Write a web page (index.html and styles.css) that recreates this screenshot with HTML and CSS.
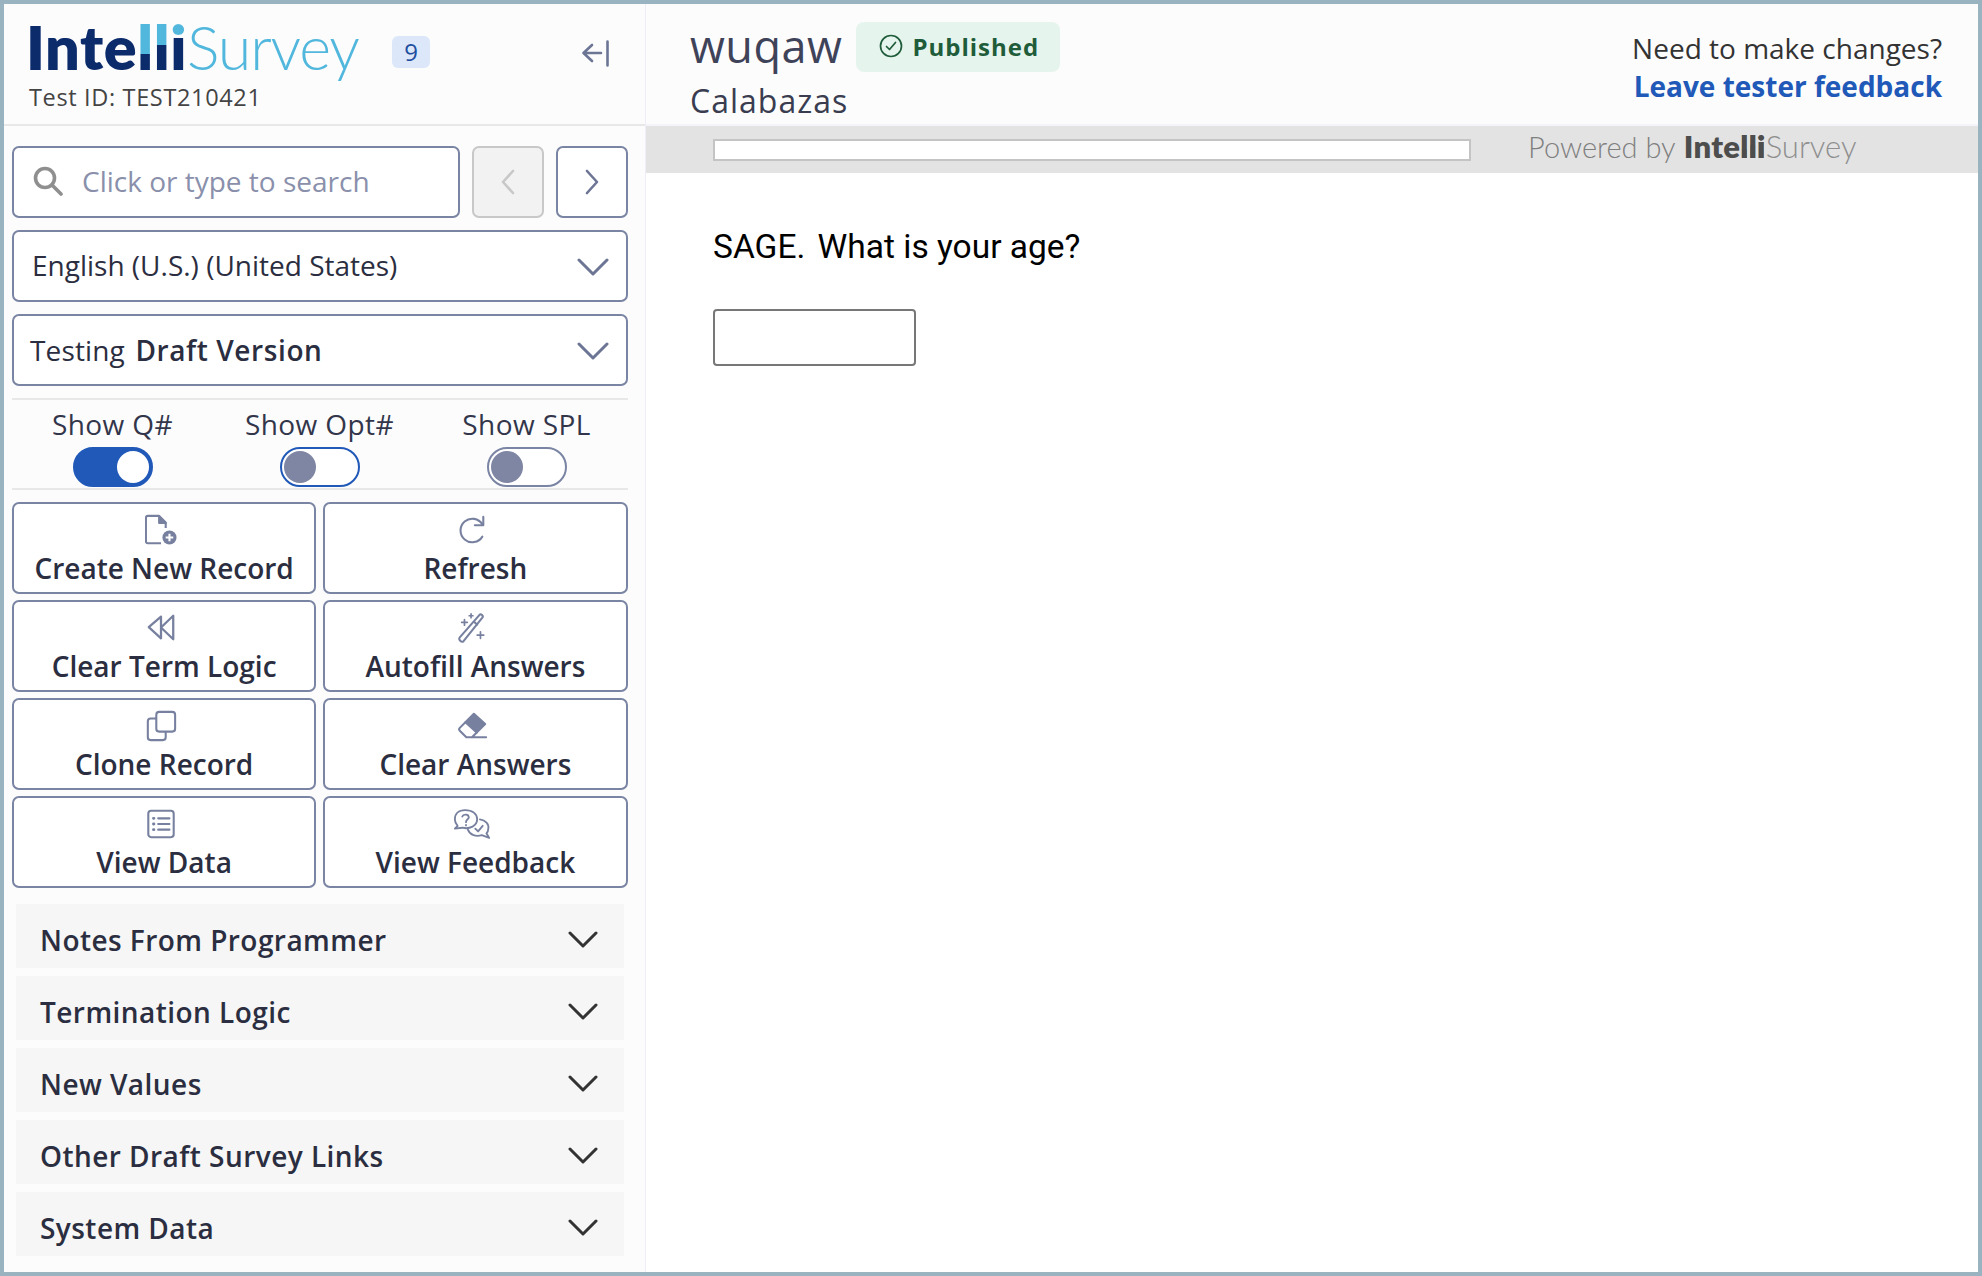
FILE: index.html
```html
<!DOCTYPE html>
<html lang="en">
<head>
<meta charset="utf-8">
<title>IntelliSurvey test</title>
<link rel="stylesheet" href="styles.css">
</head>
<body>
<div class="frame">
  <aside class="sidebar">
    <header class="brand">
      <div class="brand-top">
        <div class="logo"><span class="logo-bold">Inte</span><span class="logo-bold l1">l</span><span class="logo-bold l2">l</span><span class="logo-bold l3">i</span><span class="logo-light">Survey</span></div>
        <span class="count">9</span>
        <svg class="collapse" viewBox="0 0 30 30" fill="none" stroke-width="2.600" stroke-linecap="round" stroke-linejoin="round"><path d="M12 7 3.500 15l8.500 8M4 15h17M27.500 3.500v24"/></svg>
      </div>
      <div class="test-id">Test ID: TEST210421</div>
    </header>
    <div class="controls">
      <div class="search-row">
        <div class="box search">
          <svg class="search-icon" viewBox="0 0 30 30" fill="none" stroke="#8f8f8f" stroke-width="3.600"><circle cx="12" cy="12" r="9.500"/><path d="m19 19 9 9" stroke-linecap="round"/></svg>
          <span class="placeholder">Click or type to search</span>
        </div>
        <button class="box nav disabled"><svg viewBox="0 0 16 26" fill="none" stroke="#c8c8c8" stroke-width="2.600" stroke-linecap="round" stroke-linejoin="round"><path d="M13 2 3 13l10 11"/></svg></button>
        <button class="box nav"><svg viewBox="0 0 16 26" fill="none" stroke="#6c7594" stroke-width="2.600" stroke-linecap="round" stroke-linejoin="round"><path d="m3 2 10 11L3 24"/></svg></button>
      </div>
      <div class="box select lang"><span>English (U.S.) (United States)</span><svg class="chev" viewBox="0 0 32 18" fill="none" stroke="#6c7594" stroke-width="3" stroke-linecap="round" stroke-linejoin="round"><path d="m2 2 14 14L30 2"/></svg></div>
      <div class="box select version"><span>Testing <b class="strong">Draft Version</b></span><svg class="chev" viewBox="0 0 32 18" fill="none" stroke="#6c7594" stroke-width="3" stroke-linecap="round" stroke-linejoin="round"><path d="m2 2 14 14L30 2"/></svg></div>
      <div class="toggles">
        <div class="toggle-item"><span>Show Q#</span><span class="toggle on"><i></i></span></div>
        <div class="toggle-item"><span>Show Opt#</span><span class="toggle focus"><i></i></span></div>
        <div class="toggle-item"><span>Show SPL</span><span class="toggle"><i></i></span></div>
      </div>
      <div class="actions">
        <button class="box action">
          <svg viewBox="0 0 34 34" fill="none" stroke="#77809f" stroke-width="2.200" stroke-linejoin="round"><path d="M17 31H3a2 2 0 0 1-2-2V4a2 2 0 0 1 2-2h12l7 7v6"/><path d="M15 2.500v7h7z" fill="#77809f"/><circle cx="26" cy="25" r="7.500" fill="#77809f" stroke="none"/><path d="M26 21v8M22 25h8" stroke="#fff"/></svg>
          <span>Create New Record</span>
        </button>
        <button class="box action">
          <svg viewBox="0 0 34 34" fill="none" stroke="#77809f" stroke-width="2.200" stroke-linecap="round" stroke-linejoin="round"><path d="M28 11A12.500 12.500 0 1 0 28 24"/><path d="M29 3v9h-9"/></svg>
          <span>Refresh</span>
        </button>
        <button class="box action">
          <svg viewBox="0 0 34 34" fill="none" stroke="#77809f" stroke-width="2.400" stroke-linejoin="round"><path d="M17 5 4 16l13 12zM30 4v25L17 16.500z"/></svg>
          <span>Clear Term Logic</span>
        </button>
        <button class="box action">
          <svg viewBox="0 0 34 34" fill="none" stroke="#77809f" stroke-width="2.200" stroke-linecap="round" stroke-linejoin="round"><path d="M4 27 25 3c1.500-1.500 4.500 1 3 3L8 31c-2 2-6-2-4-4zM19 10l3.500 3.500"/><path d="M9 8v6M6 11h6M16 2v4M14 4h4M26 21v7M22.500 24.500h7" stroke-width="1.800"/></svg>
          <span>Autofill Answers</span>
        </button>
        <button class="box action">
          <svg viewBox="0 0 34 34" fill="none" stroke="#77809f" stroke-width="2.200" stroke-linejoin="round"><rect x="12" y="2" width="20" height="21" rx="3"/><path d="M12 9H6a3 3 0 0 0-3 3v17a3 3 0 0 0 3 3h13a3 3 0 0 0 3-3v-6"/></svg>
          <span>Clone Record</span>
        </button>
        <button class="box action">
          <svg viewBox="0 0 34 34" fill="none" stroke="#77809f" stroke-width="2.200" stroke-linecap="round" stroke-linejoin="round"><path d="M19 4 31 15 22 24 10 13z" fill="#77809f"/><path d="m10 13-6 6q-1.500 1.500 0 3l7 7h21M22 24l-5 5"/></svg>
          <span>Clear Answers</span>
        </button>
        <button class="box action">
          <svg viewBox="0 0 34 34" fill="none" stroke="#77809f" stroke-width="2.200" stroke-linecap="round"><rect x="3.500" y="3" width="27" height="28" rx="3"/><path d="M9 11h.5M9 17h.5M9 23h.5" stroke-width="3"/><path d="M14 11h12M14 17h12M14 23h12"/></svg>
          <span>View Data</span>
        </button>
        <button class="box action wide-icon">
          <svg viewBox="0 0 42 34" fill="none" stroke="#77809f" stroke-width="2" stroke-linecap="round" stroke-linejoin="round"><path d="M13 2C6 2 2 6 2 12c0 3 1 5 3 7l-3 3 8-1c8 2 16-2 16-9 0-6-5-10-13-10z"/><path d="M29 12c6 1 10 5 9 10 0 2-1 4-2 5l3 5-8-3c-6 2-13 0-15-6"/><path d="M10 9c1-3 7-3 7 1 0 2-3 2-3 5M14 18v.5M24 22l3 3 5-6"/></svg>
          <span>View Feedback</span>
        </button>
      </div>
      <div class="accordions">
        <div class="acc"><span>Notes From Programmer</span><svg viewBox="0 0 30 18" fill="none" stroke="#333" stroke-width="3" stroke-linecap="round" stroke-linejoin="round"><path d="m2 2 13 13L28 2"/></svg></div>
        <div class="acc"><span>Termination Logic</span><svg viewBox="0 0 30 18" fill="none" stroke="#333" stroke-width="3" stroke-linecap="round" stroke-linejoin="round"><path d="m2 2 13 13L28 2"/></svg></div>
        <div class="acc"><span>New Values</span><svg viewBox="0 0 30 18" fill="none" stroke="#333" stroke-width="3" stroke-linecap="round" stroke-linejoin="round"><path d="m2 2 13 13L28 2"/></svg></div>
        <div class="acc"><span>Other Draft Survey Links</span><svg viewBox="0 0 30 18" fill="none" stroke="#333" stroke-width="3" stroke-linecap="round" stroke-linejoin="round"><path d="m2 2 13 13L28 2"/></svg></div>
        <div class="acc"><span>System Data</span><svg viewBox="0 0 30 18" fill="none" stroke="#333" stroke-width="3" stroke-linecap="round" stroke-linejoin="round"><path d="m2 2 13 13L28 2"/></svg></div>
      </div>
    </div>
  </aside>
  <main class="main">
    <header class="topbar">
      <div class="title-block">
        <div class="title-row">
          <h1 class="title">wuqaw</h1>
          <span class="status"><svg viewBox="0 0 24 24" fill="none" stroke="#1f5c3a" stroke-width="1.700" stroke-linecap="round" stroke-linejoin="round"><circle cx="12" cy="12" r="10.500"/><path d="m7.500 12.500 3 3 6-7"/></svg>Published</span>
        </div>
        <div class="subtitle">Calabazas</div>
      </div>
      <div class="feedback">
        <div>Need to make changes?</div>
        <a class="feedback-link" href="#">Leave tester feedback</a>
      </div>
    </header>
    <div class="progress-bar">
      <div class="progress"></div>
      <div class="powered">Powered by <span class="pw-logo"><span class="pw-bold">Inte</span><span class="pw-bold p1">l</span><span class="pw-bold p2">l</span><span class="pw-bold p3">i</span><span class="pw-light">Survey</span></span></div>
    </div>
    <section class="question">
      <p class="q-text">SAGE. <span class="q-body">What is your age?</span></p>
      <input class="q-input" type="text" aria-label="Age">
    </section>
  </main>
</div>
</body>
</html>
```
FILE: styles.css
```css
* { box-sizing: border-box; }
html, body { margin: 0; padding: 0; }
body {
  font-family: "Open Sans", sans-serif;
  color: #2b2e40;
  background: #fff;
}
.frame {
  width: 1982px;
  height: 1276px;
  border: 4px solid #9ab3c1;
  display: flex;
  overflow: hidden;
}
.sidebar {
  width: 642px;
  flex: none;
  background: #fcfcfd;
  border-right: 1px solid #eeeef8;
  display: flex;
  flex-direction: column;
}
.brand {
  height: 122px;
  border-bottom: 2px solid #e8e8e8;
  padding: 12px 0 0 22px;
}
.brand-top { display: flex; align-items: flex-start; height: 62px; }
.logo {
  font-family: Lato, sans-serif;
  font-size: 61px;
  line-height: 62px;
  height: 62px;
  width: 366px;
  white-space: nowrap;
  letter-spacing: .6px;
}
.logo-bold { font-weight: 800; color: #0b2b6b; }
.logo-light { font-weight: 300; color: #52b7dc; letter-spacing: -1.200px; }
.l1, .l2, .l3, .p1, .p2, .p3 { -webkit-background-clip: text; background-clip: text; color: transparent; }
.l1 { background-image: linear-gradient(#52b7dc 44px, #0b2b6b 44px); }
.l2 { background-image: linear-gradient(#52b7dc 35px, #0b2b6b 35px); }
.l3 { background-image: linear-gradient(#52b7dc 26px, #0b2b6b 26px); }
.count {
  width: 38px;
  height: 32px;
  margin-top: 20px;
  border-radius: 6px;
  background: #dce8f9;
  color: #1f4ea0;
  font-size: 24px;
  line-height: 32px;
  text-align: center;
}
.collapse {
  width: 30px;
  height: 30px;
  margin: 22px 0 0 150px;
  stroke: #6c7594;
}
.test-id { font-size: 23.500px; line-height: 32px; margin-top: 3px; letter-spacing: .65px; color: #444; padding-left: 3px; }
.controls {
  padding: 20px 17.500px 0 8px;
  display: flex;
  flex-direction: column;
}
.box {
  border: 2px solid #7a84a3;
  border-radius: 7px;
  background: #fff;
  height: 72px;
  font-family: inherit;
}
.search-row { display: flex; gap: 12px; margin-bottom: 12px; }
.search { flex: 1; display: flex; align-items: center; padding: 0 0 2px 19px; }
.search-icon { width: 30px; height: 30px; flex: none; margin-right: 19px; }
.placeholder { font-size: 28px; color: #8a90ab; white-space: nowrap; }
.nav { width: 72px; display: flex; align-items: center; justify-content: center; padding: 0; }
.nav svg { width: 16px; height: 26px; }
.nav.disabled { background: #f2f2f2; border-color: #c8c8c8; }
.select {
  display: flex;
  align-items: center;
  justify-content: space-between;
  font-size: 28px;
  padding: 0 17px 0 18px;
  margin-bottom: 12px;
  color: #2b2e40;
}
.lang { padding-bottom: 2px; }
.lang .chev { margin-top: 4px; }
.version { padding-left: 16px; letter-spacing: .15px; }
.strong { font-weight: 600; margin-left: 3px; letter-spacing: .6px; }
.chev { width: 32px; height: 18px; margin-top: 2px; }
.toggles {
  display: grid;
  grid-template-columns: repeat(3, 207px);
  margin: 0 -7px 0 -3px;
  position: relative;
  padding-top: 7px;
  height: 92px;
}
.toggles::before, .toggles::after {
  content: "";
  position: absolute;
  left: 3px;
  right: 7px;
  height: 2px;
  background: #e8e8e8;
}
.toggles::before { top: 0; }
.toggles::after { bottom: 0; }
.toggle-item { display: flex; flex-direction: column; align-items: center; font-size: 28px; line-height: 38px; letter-spacing: .4px; color: #33364a; }
.toggle {
  width: 80px;
  height: 40px;
  margin-top: 4px;
  border-radius: 20px;
  border: 2px solid #7a84a3;
  background: #fff;
  padding: 2px;
  display: flex;
}
.toggle i { width: 32px; height: 32px; border-radius: 50%; background: #7f86a3; }
.toggle.on { background: #2159b8; border-color: #2159b8; justify-content: flex-end; }
.toggle.on i { background: #fff; }
.toggle.focus { border-color: #2159b8; }
.actions {
  display: grid;
  grid-template-columns: 1fr 1fr;
  gap: 6px 7px;
  margin-top: 12px;
}
.action {
  height: 92px;
  padding: 10px 0 0;
  display: flex;
  flex-direction: column;
  align-items: center;
  color: #2b2e40;
  font-size: 28px;
  font-weight: 600;
}
.action svg { width: 32px; height: 32px; flex: none; margin-right: 6px; }
.action.wide-icon svg { width: 39px; }
.action span { line-height: 38px; margin-top: 3px; }
.accordions { display: flex; flex-direction: column; gap: 8px; margin-top: 16px; padding: 0 4px; }
.acc {
  height: 64px;
  background: #f6f6f6;
  display: flex;
  align-items: center;
  justify-content: space-between;
  padding: 0 26px 0 24px;
  font-size: 28px;
  font-weight: 600;
  letter-spacing: .45px;
  color: #2b2e40;
}
.acc span { padding-top: 7px; }
.acc svg { width: 30px; height: 18px; margin-top: 7px; }
.main { flex: 1; min-width: 0; display: flex; flex-direction: column; background: #fff; }
.topbar {
  height: 122px;
  background: #fcfcfd;
  border-bottom: 2px solid #f3f3fa;
  display: flex;
  justify-content: space-between;
  padding: 18px 36px 0 44px;
}
.title-row { display: flex; align-items: flex-start; gap: 14px; }
.title { margin: -1px 0 0; font-size: 45px; font-weight: 400; line-height: 50px; color: #3f4359; letter-spacing: .5px; }
.status {
  height: 50px;
  width: 204px;
  border-radius: 8px;
  background: #e6f4ee;
  color: #1f5c3a;
  display: flex;
  align-items: center;
  padding: 0 0 2px 23px;
  font-size: 24px;
  font-weight: 700;
  letter-spacing: 1px;
}
.status svg { width: 24px; height: 24px; margin-right: 9px; flex: none; }
.subtitle { font-size: 32px; line-height: 40px; letter-spacing: 1px; color: #3a3d50; margin-top: 9px; }
.feedback { text-align: right; font-size: 28px; line-height: 38px; color: #333; padding-top: 7px; }
.feedback-link { font-weight: 700; color: #2159b8; text-decoration: none; }
.progress-bar {
  height: 47px;
  background: #e3e3e3;
  display: flex;
  align-items: center;
  padding: 0 0 0 67px;
}
.progress { width: 758px; height: 22px; border: 2px solid #c4c4c4; background: #fff; }
.powered { margin: 0 0 7px 57px; font-size: 29px; font-weight: 300; color: #7f7f7f; white-space: nowrap; font-family: Lato, sans-serif; }
.pw-logo { margin-left: 1px; font-size: 31px; }
.pw-bold { font-weight: 800; color: #4d4d4d; letter-spacing: .3px; }
.p1 { background-image: linear-gradient(#999 22px, #4d4d4d 22px); }
.p2 { background-image: linear-gradient(#999 18px, #4d4d4d 18px); }
.p3 { background-image: linear-gradient(#999 13px, #4d4d4d 13px); }
.pw-light { color: #8f8f8f; }
.question { padding: 52px 0 0 67px; }
.q-text { margin: 0; font-family: Roboto, sans-serif; font-size: 33.500px; line-height: 44px; color: #000; }
.q-body { margin-left: 4px; }
.q-input { display: block; width: 203px; height: 57px; margin-top: 40px; border: 2px solid #777; border-radius: 4px; background: #fff; }
```
